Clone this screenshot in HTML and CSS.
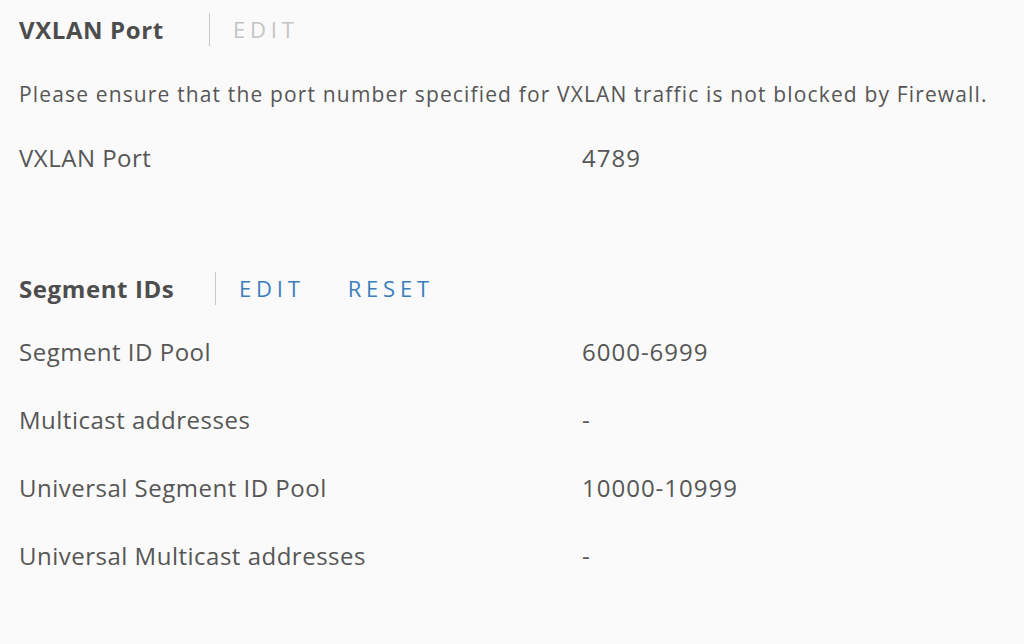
FILE: index.html
```html
<!DOCTYPE html>
<html lang="en">
<head>
    <meta charset="UTF-8">
    <title>VXLAN Settings</title>
    <link rel="stylesheet" href="styles.css">
</head>
<body>

    <section class="panel">
        <div class="panel-header">
            <h2>VXLAN Port</h2>
            <div class="actions">
                <button type="button" class="link" disabled>EDIT</button>
            </div>
        </div>
        <p class="note">Please ensure that the port number specified for VXLAN traffic is not blocked by Firewall.</p>
        <div class="row">
            <span class="label">VXLAN Port</span>
            <span class="value">4789</span>
        </div>
    </section>

    <section class="panel segments">
        <div class="panel-header">
            <h2>Segment IDs</h2>
            <div class="actions">
                <button type="button" class="link">EDIT</button>
                <button type="button" class="link">RESET</button>
            </div>
        </div>
        <div class="row">
            <span class="label">Segment ID Pool</span>
            <span class="value">6000-6999</span>
        </div>
        <div class="row">
            <span class="label">Multicast addresses</span>
            <span class="value">-</span>
        </div>
        <div class="row">
            <span class="label">Universal Segment ID Pool</span>
            <span class="value">10000-10999</span>
        </div>
        <div class="row">
            <span class="label">Universal Multicast addresses</span>
            <span class="value">-</span>
        </div>
    </section>

</body>
</html>
```

FILE: styles.css
```css
body{
    font-family: "Open Sans", "Liberation Sans", sans-serif;
    background-color: #fafafa;
    color: #565656;
    margin: 0;
    padding: 0 19px;
}

.panel-header{
    display: flex;
    align-items: center;
    height: 58px;
}

h2{
    margin: 0;
    font-size: 24px;
    font-weight: 700;
    letter-spacing: 0.6px;
    color: #4d4d4d;
    width: 190px;
}

.actions{
    display: flex;
    align-items: center;
    gap: 43px;
    border-left: 1px solid #c8c8c8;
    height: 33px;
    padding-left: 23px;
}

.link{
    background: none;
    border: none;
    padding: 0;
    font-family: inherit;
    font-size: 22px;
    letter-spacing: 4.8px;
    color: #3a7ebd;
    cursor: pointer;
}

.link:disabled{
    color: #c4c4c4;
    cursor: default;
}

.note{
    margin: 24px 0 37px;
    font-size: 21px;
    letter-spacing: 1.15px;
    line-height: 24px;
}

.row{
    display: flex;
    height: 68px;
    align-items: flex-start;
    font-size: 24px;
    letter-spacing: 0.5px;
    line-height: 30px;
}

.value{
    letter-spacing: 1px;
}

.label{
    width: 563px;
}

.segments{
    margin-top: 48px;
}

.segments .panel-header{
    margin-bottom: 20px;
}

.segments h2{
    width: 196px;
}

.segments .actions{
    padding-left: 23px;
}
```
